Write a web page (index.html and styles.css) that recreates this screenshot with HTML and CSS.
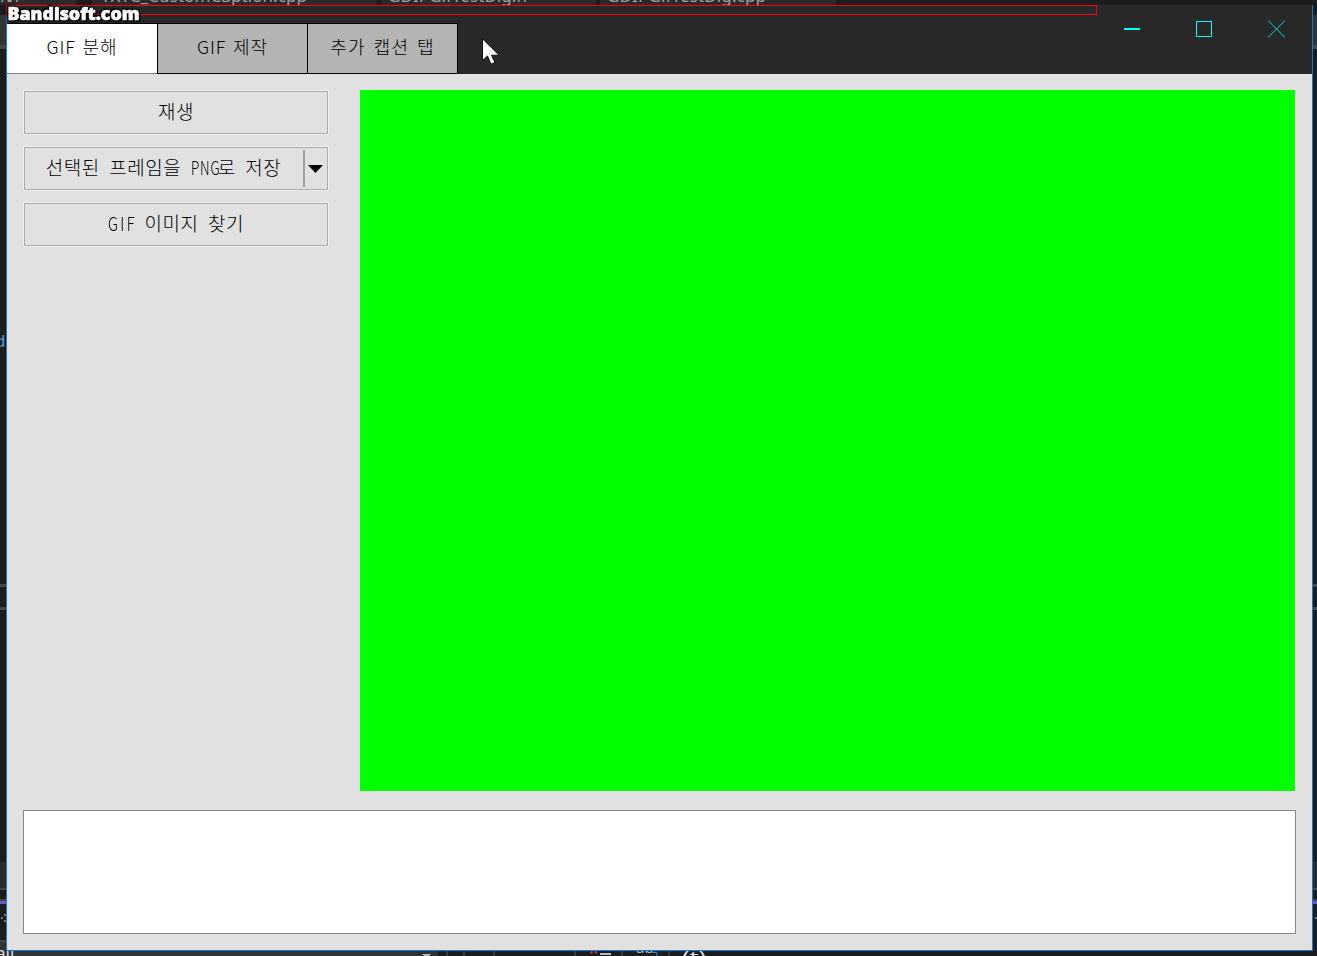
FILE: index.html
```html
<!DOCTYPE html>
<html lang="ko">
<head>
<meta charset="utf-8">
<title>GIF 분해</title>
<link rel="stylesheet" href="styles.css">
</head>
<body>
<div class="desktop">
  <!-- editor showing around the edges of the window -->
  <svg class="editor" width="1317" height="956" viewBox="0 0 1317 956">
    <rect width="1317" height="956" fill="#1c1c1c"/>
    <path fill="#2b2b2b" d="M0 0h76v5H0zM92 0h285v5H92zM381 0h215v5H381zM600 0h236v5H600z"/>
    <path fill="#333" d="M0 15h6v33H0zM1313 15h4v33h-4z"/>
    <path fill="#464646" d="M0 45h6v4H0zM1313 45h4v4h-4zM0 584h6v3H0zM0 607h6v3H0zM1313 584h4v3h-4zM1313 607h4v3h-4z"/>
    <path fill="#2b2b2b" d="M0 862h6v26H0zM1313 862h4v26h-4z"/>
    <path fill="#444" d="M0 888h6v2H0zM1313 888h4v2h-4zM0 899h6v2H0zM1313 899h4v2h-4zM0 940h6v2H0z"/>
    <path fill="#6a5acd" d="M0 901h6v3H0zM1313 901h4v3h-4z"/>
    <path fill="#777" d="M4 914h2v2H4zM1 917h2v2H1zM4 920h2v2H4zM1315 917h2v2h-2z"/>
    <path fill="#333" d="M0 942h6v14H0zM6 951h432v5H6z"/>
    <path fill="#3a3a3a" d="M446 951h2v5h-2zM493 951h2v5h-2zM574 951h2v5h-2zM621 951h2v5h-2zM668 951h2v5h-2zM463 951h2v5h-2z"/>
    <path fill="#b8b8b8" d="M422 954h9l-2 2h-5zM600 953h11v2h-11z"/>
    <path stroke="#d23c3c" stroke-width="2" fill="none" d="M590.500 953l2-1.500M595 951.500l2 1.500"/>
    <path stroke="#2f86d6" fill="none" d="M652 952.500h5v4"/>
    <g class="editor-text">
      <text x="0" y="2" textLength="19">n.h</text>
      <text x="101" y="2" textLength="206">TXTC_CustomCaption.cpp</text>
      <text x="388" y="2" textLength="139">GDIPGifTestDlg.h</text>
      <text x="607" y="2" textLength="159">GDIPGifTestDlg.cpp</text>
      <text x="-5" y="347" class="keyword">d</text>
      <text x="-4" y="959" class="bright">all</text>
      <text x="636" y="953" class="small">ab</text>
      <text x="682" y="963" class="bright" textLength="24" lengthAdjust="spacingAndGlyphs">(t)</text>
    </g>
  </svg>

  <main class="window">
    <header class="caption">
      <nav class="tabs">
        <div class="tab active">GIF 분해</div>
        <div class="tab">GIF 제작</div>
        <div class="tab last">추가 캡션 탭</div>
      </nav>
      <div class="controls">
        <svg width="18" height="18" viewBox="0 0 18 18"><path d="M1 9h16" stroke="#00ffff" stroke-width="2"/></svg>
        <svg width="18" height="18" viewBox="0 0 18 18"><path d="M1.500 1.500h15v15h-15z" fill="none" stroke="#00ffff"/></svg>
        <svg width="18" height="18" viewBox="0 0 18 18"><path d="M1 .5l17 17M18 .5l-17 17" stroke="#00dce0"/></svg>
      </div>
    </header>
    <section class="content">
      <div class="buttons">
        <div class="button">재생</div>
        <div class="button split">
          <span class="label">선택된 프레임을 <span class="latin">PNG</span>로 저장</span>
          <span class="drop"><svg width="15" height="8" viewBox="0 0 15 8"><path d="M0 0h15L7.500 8z"/></svg></span>
        </div>
        <div class="button"><span class="latin wide">GIF</span>&nbsp;이미지 찾기</div>
      </div>
      <div class="preview"></div>
      <div class="log"></div>
    </section>
  </main>

  <div class="record-frame"></div>
  <svg class="watermark" width="150" height="28" viewBox="0 0 150 28"><text x="7.500" y="20" textLength="132" lengthAdjust="spacingAndGlyphs">Bandisoft.com</text></svg>
  <svg class="cursor" width="18" height="28" viewBox="0 0 18 28"><path d="M.5.8v21.700l5-4.500 3.500 8.200 4-1.700-3.500-7.300h7.500z" fill="#fff" stroke="#10101c"/></svg>
</div>
</body>
</html>
```
FILE: styles.css
```css
* { box-sizing: border-box; }
body { margin: 0; font-family: "Noto Sans CJK KR", sans-serif; }
svg { display: block; }
.desktop {
  position: relative;
  width: 1317px;
  height: 956px;
  padding: 5px 4px 5px 6px;
  overflow: hidden;
}
.editor { position: absolute; left: 0; top: 0; }
.editor-text { font: 17px "Noto Sans", sans-serif; fill: #a0a0a0; }
.keyword { fill: #569cd6; }
.bright { fill: #dcdcdc; }
.small { font-size: 15px; fill: #b8b8b8; }
.window {
  position: relative;
  display: flex;
  flex-direction: column;
  width: 1307px;
  height: 946px;
  border: 1px solid #0c7cdc;
  border-top: 0;
  background: #e1e1e1;
}
.caption {
  display: flex;
  justify-content: space-between;
  height: 69px;
  background: #282828;
}
.tabs { display: flex; padding-top: 18px; }
.tab {
  width: 150px;
  height: 51px;
  border: 1px solid #000;
  border-right: 0;
  background: #b4b4b4;
  font-size: 18px;
  font-weight: 300;
  line-height: 44px;
  letter-spacing: 0.9px;
  word-spacing: 0.8px;
  text-align: center;
  white-space: nowrap;
}
.tab.active { border-left: 0; border-bottom-color: #808080; background: #fff; }
.tab.last { width: 151px; border-right: 1px solid #000; letter-spacing: 1.4px; word-spacing: 1px; }
.controls { display: flex; gap: 54px; padding: 15px 27px 0 0; }
.content {
  display: grid;
  grid-template-columns: 306px 935px;
  grid-template-rows: 701px 124px;
  column-gap: 31px;
  row-gap: 19px;
  padding: 16px;
}
.buttons { display: flex; flex-direction: column; gap: 11px; }
.button {
  display: flex;
  align-items: center;
  justify-content: center;
  height: 45px;
  padding-bottom: 4px;
  border: 1px solid #efefef;
  outline: 1px solid #adadad;
  outline-offset: -2px;
  color: #000;
  font-size: 19px;
  font-weight: 300;
  letter-spacing: 0.5px;
  word-spacing: 3.7px;
  white-space: nowrap;
}
.latin {
  display: inline-block;
  width: 27px;
  letter-spacing: 1px;
  transform: scaleX(0.72);
  transform-origin: left;
}
.latin.wide { letter-spacing: 3px; transform: scaleX(0.78); }
.split { padding: 0; }
.label { flex: 1; padding-bottom: 4px; text-align: center; }
.drop {
  display: flex;
  align-items: center;
  width: 25px;
  height: 37px;
  padding-left: 3px;
  border-left: 2px solid;
  border-image: linear-gradient(to right, #a0a0a0 50%, #696969 50%) 1;
}
.preview { background: #0f0; }
.log { grid-column: 1 / -1; width: 1273px; border: 1px solid #828790; background: #fff; }
.record-frame {
  position: absolute;
  left: 6px;
  top: 5px;
  width: 1091px;
  height: 10px;
  border: 1px solid #f00;
}
.watermark { position: absolute; left: 0; top: 0; }
.watermark text {
  font: 800 17.5px "Open Sans", sans-serif;
  fill: #fff;
  stroke: #fff;
  stroke-width: 0.6px;
  filter: drop-shadow(1px 1px 0 #000) drop-shadow(-1px -1px 0 #000) drop-shadow(0 0 1px #000);
}
.cursor { position: absolute; left: 482px; top: 38px; }
```
